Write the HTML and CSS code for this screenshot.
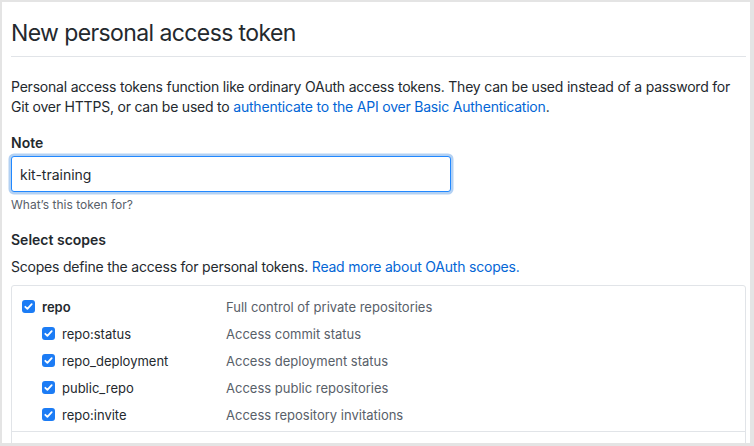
FILE: index.html
```html
<!DOCTYPE html>
<html>
<head>
<meta charset="utf-8">
<link rel="stylesheet" href="styles.css">
</head>
<body>
<div class="frame">
  <div class="content">
    <h1 class="title">New personal access token</h1>
    <p class="intro">Personal access tokens function like ordinary OAuth access tokens. They can be used instead of a password for Git over HTTPS, or can be used to <a href="#">authenticate to the API over Basic Authentication</a>.</p>
    <div class="field">
      <label class="label">Note</label>
      <input class="input" type="text" value="kit-training">
      <div class="hint">What’s this token for?</div>
    </div>
    <div class="field scopes-field">
      <div class="label">Select scopes</div>
      <p class="scopes-intro">Scopes define the access for personal tokens. <a href="#">Read more about OAuth scopes.</a></p>
      <div class="scope-box">
        <div class="group">
          <div class="row top">
            <span class="name"><span class="cb"><svg viewBox="0 0 13 13" width="13" height="13"><path d="M3.3 6.8 L5.4 8.9 L9.7 4.2" fill="none" stroke="#fff" stroke-width="1.8" stroke-linecap="round" stroke-linejoin="round"/></svg></span><b>repo</b></span>
            <span class="desc">Full control of private repositories</span>
          </div>
          <div class="row sub">
            <span class="name"><span class="cb"><svg viewBox="0 0 13 13" width="13" height="13"><path d="M3.3 6.8 L5.4 8.9 L9.7 4.2" fill="none" stroke="#fff" stroke-width="1.8" stroke-linecap="round" stroke-linejoin="round"/></svg></span>repo:status</span>
            <span class="desc">Access commit status</span>
          </div>
          <div class="row sub">
            <span class="name"><span class="cb"><svg viewBox="0 0 13 13" width="13" height="13"><path d="M3.3 6.8 L5.4 8.9 L9.7 4.2" fill="none" stroke="#fff" stroke-width="1.8" stroke-linecap="round" stroke-linejoin="round"/></svg></span>repo_deployment</span>
            <span class="desc">Access deployment status</span>
          </div>
          <div class="row sub">
            <span class="name"><span class="cb"><svg viewBox="0 0 13 13" width="13" height="13"><path d="M3.3 6.8 L5.4 8.9 L9.7 4.2" fill="none" stroke="#fff" stroke-width="1.8" stroke-linecap="round" stroke-linejoin="round"/></svg></span>public_repo</span>
            <span class="desc">Access public repositories</span>
          </div>
          <div class="row sub">
            <span class="name"><span class="cb"><svg viewBox="0 0 13 13" width="13" height="13"><path d="M3.3 6.8 L5.4 8.9 L9.7 4.2" fill="none" stroke="#fff" stroke-width="1.8" stroke-linecap="round" stroke-linejoin="round"/></svg></span>repo:invite</span>
            <span class="desc">Access repository invitations</span>
          </div>
        </div>
        <div class="group next"></div>
      </div>
    </div>
  </div>
</div>
</body>
</html>
```

FILE: styles.css
```css
* { box-sizing: border-box; }
html, body { margin: 0; padding: 0; }
body {
  width: 754px;
  height: 446px;
  overflow: hidden;
  background: #e6e6e6;
  font-family: Inter, "Noto Sans", sans-serif;
  color: #24292e;
}
.frame {
  width: 754px;
  height: 446px;
  border-style: solid;
  border-color: #e4e4e4;
  border-width: 2px 4px 3px 2px;
  background: #fff;
  overflow: hidden;
}
.content {
  padding: 0 4px 0 9px;
}
.title {
  margin: 0;
  padding-top: 16px;
  font-size: 23px;
  font-weight: 400;
  line-height: 30px;
  height: 55px;
  border-bottom: 1px solid #e1e4e8;
  letter-spacing: -0.6px;
}
.intro {
  margin: 20px 0 0;
  font-size: 14px;
  line-height: 20px;
  letter-spacing: -0.21px;
}
a { color: #0366d6; text-decoration: none; }
.field { margin-top: 16px; }
.label {
  display: block;
  font-size: 14px;
  font-weight: 600;
  line-height: 20px;
  margin-bottom: 3px;
}
.input {
  display: block;
  width: 440px;
  height: 36px;
  padding: 0 8px;
  font-family: inherit;
  font-size: 14px;
  color: #24292e;
  border: 1px solid #2188ff;
  border-radius: 3px;
  box-shadow: 0 0 0 2.5px rgba(3, 102, 214, 0.3);
  outline: none;
}
.hint {
  font-size: 12px;
  color: #586069;
  margin-top: 5px;
  line-height: 16px;
}
.scopes-field { margin-top: 17px; }
.scopes-field .label { margin-bottom: 6px; }
.scopes-intro {
  margin: 0;
  font-size: 14px;
  line-height: 21px;
  letter-spacing: -0.21px;
}
.scope-box {
  margin-top: 8px;
  border: 1px solid #e1e4e8;
  border-radius: 3px;
  height: 200px;
}
.group { padding: 7px 0 3px; }
.group.next { border-top: 1px solid #e1e4e8; }
.row {
  display: grid;
  grid-template-columns: 214px 1fr;
  height: 27px;
  align-items: center;
  font-size: 13px;
}
.row .name {
  display: flex;
  align-items: center;
  gap: 7px;
  padding-left: 10px;
}
.row.sub .name { padding-left: 30px; }
.cb {
  width: 13px;
  height: 13px;
  border-radius: 3px;
  background: #1c7cf5;
  display: inline-block;
}
.cb svg { display: block; }
.name b { font-weight: 600; }
.desc { color: #586069; }
```
